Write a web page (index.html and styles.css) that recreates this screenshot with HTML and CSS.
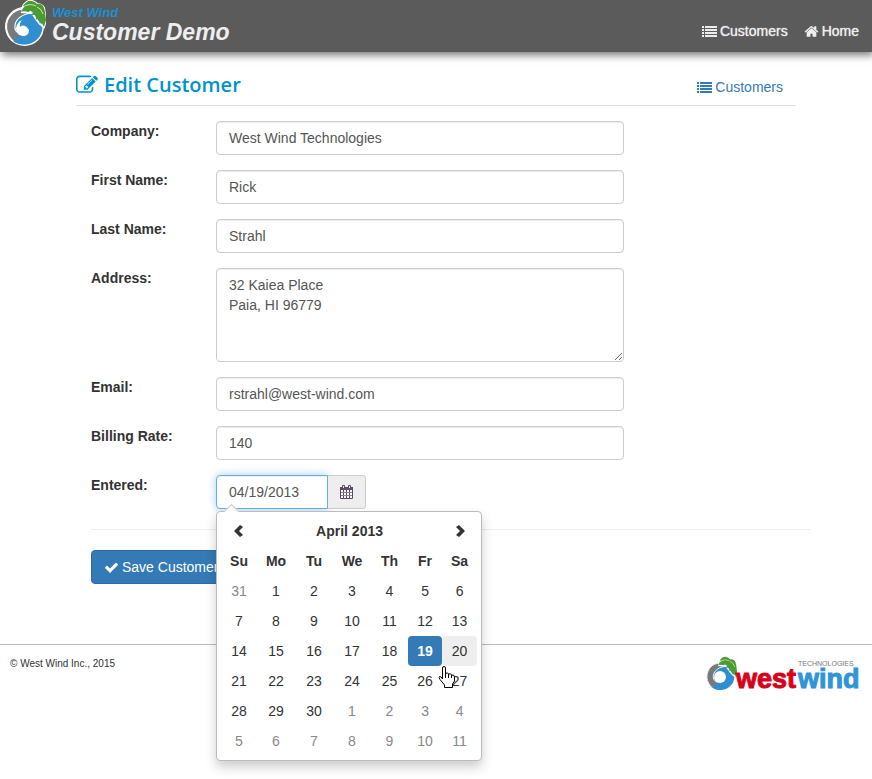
FILE: index.html
```
<!DOCTYPE html>
<html lang="en">
<head>
    <meta charset="UTF-8">
    <meta name="viewport" content="width=device-width, initial-scale=1.0">
    <title>West Wind Customer Demo</title>
    <link rel="stylesheet" href="styles.css">
</head>
<body>
    <!-- shared icons -->
    <svg class="symbols" aria-hidden="true">
        <symbol id="icon-list" viewBox="0 0 15 12">
            <path d="M0 0h2v2H0zM3 0h12v2H3zM0 3h2v2H0zM3 3h12v2H3zM0 6h2v2H0zM3 6h12v2H3zM0 9h2v2H0zM3 9h12v2H3z"/>
        </symbol>
        <symbol id="icon-home" viewBox="0 0 1792 1792">
            <path d="M1472 992v480q0 26-19 45t-45 19h-384v-384h-256v384h-384q-26 0-45-19t-19-45v-480q0-1 .5-3t.5-3l575-474 575 474q1 2 1 6zm223-69l-62 74q-8 9-21 11h-3q-13 0-21-7l-692-577-692 577q-12 8-24 7-13-2-21-11l-62-74q-8-10-7-23.5t11-21.5l719-599q32-26 76-26t76 26l244 204v-195q0-14 9-23t23-9h192q14 0 23 9t9 23v408l219 182q10 8 11 21.5t-7 23.5z"/>
        </symbol>
        <symbol id="icon-check" viewBox="0 0 1792 1792">
            <path d="M1671 566q0 40-28 68l-724 724-136 136q-28 28-68 28t-68-28l-136-136-362-362q-28-28-28-68t28-68l136-136q28-28 68-28t68 28l294 295 656-657q28-28 68-28t68 28l136 136q28 28 28 68z"/>
        </symbol>
        <symbol id="icon-edit" viewBox="0 0 1792 1792">
            <path d="M888 1184l116-116-152-152-116 116v56h96v96h56zm440-720q-16-16-33 1l-350 350q-17 17-1 33t33-1l350-350q17-17 1-33zm80 594v190q0 119-84.5 203.5t-203.5 84.5h-832q-119 0-203.5-84.5t-84.5-203.5v-832q0-119 84.5-203.5t203.5-84.5h832q63 0 117 25 15 7 18 23 3 17-9 29l-49 49q-14 14-32 8-23-6-45-6h-832q-66 0-113 47t-47 113v832q0 66 47 113t113 47h832q66 0 113-47t47-113v-126q0-13 9-22l64-64q15-15 35-7t20 29zm-96-738l288 288-672 672h-288v-288zm444 132l-92 92-288-288 92-92q28-28 68-28t68 28l152 152q28 28 28 68t-28 68z"/>
        </symbol>
        <!-- wave and palm, used by both logos -->
        <symbol id="wave" viewBox="0 0 42 48">
            <circle cx="20.500" cy="26.500" r="19.500" fill="#fff"/>
            <circle cx="20.500" cy="26.500" r="18" fill="#2f8fd0"/>
            <path fill="#77797a" stroke="#fff" stroke-width="1.200" d="M25 10C12 6 2 16 2.500 28C3 34 6 38 9 41C13 41 17 38 19 35C13 34 10 30 11 25C12 19 18 14 28 13z"/>
            <path fill="#2f8fd0" d="M9 41C12 39 15 37 17 34L25 36L22 44Q14 45 9 41z"/>
        </symbol>
        <symbol id="palm" viewBox="0 0 42 48">
            <path fill="none" stroke="#fff" stroke-width="2" d="M19 6Q23 0 28 1Q32 2 33 4Q38 4 40 8L42 20L40 27L36 24L32 19L28 13L18 12z"/>
            <path fill="#4b9c2e" d="M19 6Q23 0 28 1Q32 2 33 4Q38 3 40 8L41 12L42 20L40 27L37 21L36 24L34 18L32 20L32 15L28 15L29 11Q26 10 24 12Q21 10 17 12Q19 7 22 6z"/>
            <path fill="none" stroke="#fff" stroke-width=".7" d="M20 6.500Q26 3 32 6M33 7Q37 8 39 14"/>
        </symbol>
    </svg>

    <header class="banner">
        <a class="brand" href="#">
            <svg class="brand-logo" viewBox="0 0 42 48" aria-hidden="true">
                <use href="#wave" width="42" height="48"/>
                <path fill="#fff" d="M25 30Q25 36 19 36Q12 35 12 28Q13 22 18 20Q15 24 16 27Q20 23 25 30z"/>
                <use href="#palm" width="42" height="48"/>
            </svg>
            <span class="brand-text">
                <span class="brand-small">West Wind</span>
                <span class="brand-name">Customer Demo</span>
            </span>
        </a>
        <nav class="menu">
            <a href="#"><svg class="icon-list" aria-hidden="true"><use href="#icon-list"/></svg>Customers</a>
            <a href="#"><svg class="icon" aria-hidden="true"><use href="#icon-home"/></svg>Home</a>
        </nav>
    </header>

    <main class="container">
        <div class="page-header">
            <h1><svg class="icon-edit" aria-hidden="true"><use href="#icon-edit"/></svg>Edit Customer</h1>
            <a href="#"><svg class="icon-list" aria-hidden="true"><use href="#icon-list"/></svg>Customers</a>
        </div>

        <form class="edit-form">
            <div class="form-group">
                <label for="company">Company:</label>
                <input type="text" id="company" class="form-control" value="West Wind Technologies">
            </div>
            <div class="form-group">
                <label for="first-name">First Name:</label>
                <input type="text" id="first-name" class="form-control" value="Rick">
            </div>
            <div class="form-group">
                <label for="last-name">Last Name:</label>
                <input type="text" id="last-name" class="form-control" value="Strahl">
            </div>
            <div class="form-group">
                <label for="address">Address:</label>
                <textarea id="address" class="form-control" rows="4">32 Kaiea Place
Paia, HI 96779</textarea>
            </div>
            <div class="form-group">
                <label for="email">Email:</label>
                <input type="text" id="email" class="form-control" value="rstrahl@west-wind.com">
            </div>
            <div class="form-group">
                <label for="rate">Billing Rate:</label>
                <input type="text" id="rate" class="form-control" value="140">
            </div>
            <div class="form-group">
                <label for="entered">Entered:</label>
                <div class="input-group">
                    <input type="text" id="entered" class="form-control date-input" value="04/19/2013">
                    <button type="button" class="addon" aria-label="Pick a date">
                        <svg width="13" height="14" viewBox="0 0 13 14" aria-hidden="true">
                            <path fill="#fff" d="M1 5h11v8H1z"/>
                            <path fill="#5a4a68" d="M0 2h13v3H0z"/>
                            <path fill="none" stroke="#5a4a68" d="M.5 2.500v11h12v-11M3.500 5v8M6.500 5v8M9.500 5v8"/>
                            <path fill="none" stroke="#8d8296" d="M1 7.500h11M1 10.500h11"/>
                            <path fill="#eee" stroke="#5a4a68" d="M2.500 .5h2v3h-2zM8.500 .5h2v3h-2z"/>
                        </svg>
                    </button>

                    <div class="datepicker">
                        <table>
                            <colgroup>
                                <col class="col-su"><col class="col-wide"><col class="col-wide"><col class="col-wide"><col class="col-th"><col class="col-fr"><col class="col-sa">
                            </colgroup>
                            <thead>
                                <tr>
                                    <th><button type="button" aria-label="Previous month"><svg width="12" height="12" viewBox="0 0 12 12"><path d="M7 0l3 2-4 4 4 4-3 2-6-6z"/></svg></button></th>
                                    <th colspan="5"><button type="button">April 2013</button></th>
                                    <th><button type="button" aria-label="Next month"><svg width="12" height="12" viewBox="0 0 12 12"><path d="M5 0L2 2l4 4-4 4 3 2 6-6z"/></svg></button></th>
                                </tr>
                                <tr><th>Su</th><th>Mo</th><th>Tu</th><th>We</th><th>Th</th><th>Fr</th><th>Sa</th></tr>
                            </thead>
                            <tbody>
                                <tr>
                                    <td><button type="button" class="other">31</button></td>
                                    <td><button type="button">1</button></td>
                                    <td><button type="button">2</button></td>
                                    <td><button type="button">3</button></td>
                                    <td><button type="button">4</button></td>
                                    <td><button type="button">5</button></td>
                                    <td><button type="button">6</button></td>
                                </tr>
                                <tr>
                                    <td><button type="button">7</button></td>
                                    <td><button type="button">8</button></td>
                                    <td><button type="button">9</button></td>
                                    <td><button type="button">10</button></td>
                                    <td><button type="button">11</button></td>
                                    <td><button type="button">12</button></td>
                                    <td><button type="button">13</button></td>
                                </tr>
                                <tr>
                                    <td><button type="button">14</button></td>
                                    <td><button type="button">15</button></td>
                                    <td><button type="button">16</button></td>
                                    <td><button type="button">17</button></td>
                                    <td><button type="button">18</button></td>
                                    <td><button type="button" class="active">19</button></td>
                                    <td><button type="button" class="hover">20</button></td>
                                </tr>
                                <tr>
                                    <td><button type="button">21</button></td>
                                    <td><button type="button">22</button></td>
                                    <td><button type="button">23</button></td>
                                    <td><button type="button">24</button></td>
                                    <td><button type="button">25</button></td>
                                    <td><button type="button">26</button></td>
                                    <td><button type="button">27</button></td>
                                </tr>
                                <tr>
                                    <td><button type="button">28</button></td>
                                    <td><button type="button">29</button></td>
                                    <td><button type="button">30</button></td>
                                    <td><button type="button" class="other">1</button></td>
                                    <td><button type="button" class="other">2</button></td>
                                    <td><button type="button" class="other">3</button></td>
                                    <td><button type="button" class="other">4</button></td>
                                </tr>
                                <tr>
                                    <td><button type="button" class="other">5</button></td>
                                    <td><button type="button" class="other">6</button></td>
                                    <td><button type="button" class="other">7</button></td>
                                    <td><button type="button" class="other">8</button></td>
                                    <td><button type="button" class="other">9</button></td>
                                    <td><button type="button" class="other">10</button></td>
                                    <td><button type="button" class="other">11</button></td>
                                </tr>
                            </tbody>
                        </table>
                        <svg class="pointer" width="17" height="22" viewBox="0 0 17 22" aria-hidden="true">
                            <path fill="#fff" stroke="#000" d="M4.500 13V2Q4.500 .5 6 .5T7.500 2V7.500Q10 6 10.500 8Q13 7 13.500 9Q16.500 8.500 16.500 11V15L14.500 18V21.500H6.500V19L2 13.500Q.5 11.500 1.500 10.500Q3 10 4.500 13z"/>
                            <path fill="none" stroke="#000" d="M7.500 7v5M10.500 8v4M13.500 9v3"/>
                        </svg>
                    </div>
                </div>
            </div>

            <hr>
            <button type="submit" class="btn-primary"><svg class="icon" aria-hidden="true"><use href="#icon-check"/></svg>Save Customer</button>
        </form>
    </main>

    <footer class="footer">
        <small>© West Wind Inc., 2015</small>
        <a class="footer-logo" href="#" aria-label="West Wind Technologies">
            <svg width="156" height="38" viewBox="0 0 156 38" aria-hidden="true">
                <use href="#wave" width="32" height="37"/>
                <circle cx="15" cy="21" r="6" fill="#fff"/>
                <use href="#palm" width="32" height="37"/>
                <text class="logo-west" x="31" y="32">west</text>
                <text class="logo-wind" x="93" y="32">wind</text>
                <text class="logo-tech" x="93" y="10">TECHNOLOGIES</text>
            </svg>
        </a>
    </footer>
</body>
</html>
```
FILE: styles.css
```
* {
    box-sizing: border-box;
}

body {
    min-height: 100vh;
    margin: 0;
    background-color: #fff;
    color: #333;
    font-family: "Helvetica Neue", Helvetica, Arial, "Liberation Sans", sans-serif;
    font-size: 14px;
    line-height: 20px;
}

a {
    color: #337ab7;
    text-decoration: none;
}

button,
input,
textarea {
    margin: 0;
    font-family: inherit;
    font-size: 14px;
    line-height: 20px;
}

svg {
    fill: currentColor;
}

.symbols {
    position: absolute;
    width: 0;
    height: 0;
}

.icon {
    width: 15px;
    height: 15px;
    margin-right: 3px;
    vertical-align: -3px;
}

.icon-list {
    width: 15px;
    height: 12px;
    margin-right: 3px;
    vertical-align: -2px;
}

/* banner */
.banner {
    display: flex;
    justify-content: space-between;
    height: 52px;
    padding: 0 13px 0 4px;
    background-color: #5b5b5b;
    box-shadow: 2px 3px 8px #777;
}

.brand {
    display: flex;
    gap: 6px;
    color: #eee;
    font-style: italic;
    font-weight: bold;
}

.brand-logo {
    width: 42px;
    height: 48px;
}

.brand-text {
    display: flex;
    flex-direction: column;
    padding-top: 6px;
}

.brand-small {
    color: #1a90d2;
    font-size: 13px;
    line-height: 14px;
}

.brand-name {
    font-size: 23px;
    line-height: 24px;
}

.menu {
    display: flex;
    gap: 16px;
    padding-top: 21px;
}

.menu a {
    color: #eee;
    text-shadow: 0 0 1px #eee;
}

/* page */
.container {
    max-width: 750px;
    margin: 0 auto;
    padding: 0 15px;
}

.page-header {
    display: flex;
    justify-content: space-between;
    align-items: flex-end;
    height: 54px;
    margin-bottom: 15px;
    padding: 0 13px 8px 0;
    border-bottom: 1px solid #ddd;
}

h1 {
    margin: 0;
    color: #0092d0;
    font-family: "Trebuchet MS", "Open Sans", sans-serif;
    font-size: 20px;
    font-weight: 600;
    line-height: 24px;
}

.icon-edit {
    width: 22px;
    height: 22px;
    margin-right: 6px;
    vertical-align: -4px;
}

.edit-form {
    margin-right: -15px;
    padding-left: 15px;
}

.form-group {
    display: flex;
    align-items: flex-start;
    margin-bottom: 15px;
}

label {
    width: 125px;
    font-weight: bold;
}

.form-control {
    display: block;
    width: 408px;
    height: 34px;
    padding: 6px 12px;
    border: 1px solid #ccc;
    border-radius: 4px;
    background-color: #fff;
    box-shadow: inset 0 1px 1px rgba(0, 0, 0, 0.075);
    color: #555;
}

textarea.form-control {
    height: 94px;
    resize: vertical;
}

.input-group {
    position: relative;
    display: flex;
}

.date-input {
    width: 112px;
    border-color: #66afe9;
    border-radius: 4px 0 0 4px;
    outline: 0;
    box-shadow: inset 0 1px 1px rgba(0, 0, 0, 0.075), 0 0 8px rgba(102, 175, 233, 0.6);
}

.addon {
    display: flex;
    align-items: center;
    justify-content: center;
    width: 38px;
    padding: 0;
    border: 1px solid #ccc;
    border-left: 0;
    border-radius: 0 4px 4px 0;
    background-color: #eee;
}

hr {
    margin: 20px 0;
    border: 0;
    border-top: 1px solid #eee;
}

.btn-primary {
    display: block;
    padding: 6px 12px;
    border: 1px solid #2e6da4;
    border-radius: 4px;
    background-color: #337ab7;
    color: #fff;
}

/* calendar popup */
.datepicker {
    position: absolute;
    top: 36px;
    left: 0;
    z-index: 10;
    padding: 4px;
    border: 1px solid #bbb;
    border-radius: 4px;
    background-color: #fff;
    box-shadow: 0 6px 12px rgba(0, 0, 0, 0.2);
}

.datepicker::before {
    content: "";
    position: absolute;
    top: -6px;
    left: 9px;
    width: 10px;
    height: 10px;
    border: 1px solid #ccc;
    border-right: 0;
    border-bottom: 0;
    background-color: #fff;
    transform: rotate(45deg);
}

.datepicker table {
    position: relative;
    width: 256px;
    border-spacing: 0;
    table-layout: fixed;
}

.col-su {
    width: 36px;
}

.col-wide {
    width: 38px;
}

.col-th {
    width: 37px;
}

.col-fr {
    width: 34px;
}

.col-sa {
    width: 35px;
}

.datepicker th,
.datepicker td {
    height: 30px;
    padding: 0;
    text-align: center;
}

.datepicker button {
    display: block;
    width: 100%;
    height: 30px;
    padding: 0;
    border: 0;
    border-radius: 4px;
    background: none;
    color: #333;
    font-weight: inherit;
}

.datepicker th svg {
    vertical-align: -1px;
}

.datepicker .other {
    color: #888;
}

.datepicker .active {
    background-color: #337ab7;
    color: #fff;
    font-weight: bold;
}

.datepicker .hover {
    background-color: #eee;
}

.pointer {
    position: absolute;
    top: 154px;
    left: 221px;
}

/* footer */
.footer {
    display: flex;
    justify-content: space-between;
    align-items: flex-start;
    margin-top: 60px;
    padding: 11px 11px 0 10px;
    border-top: 1px solid #bbb;
}

.footer small {
    padding-top: 2px;
    font-size: 10px;
    line-height: 12px;
}

.logo-west,
.logo-wind {
    font-size: 27px;
    font-weight: bold;
    stroke-width: 1px;
}

.logo-west {
    fill: #d9001b;
    stroke: #d9001b;
}

.logo-wind {
    fill: #2f94d8;
    stroke: #2f94d8;
}

.logo-tech {
    fill: #777;
    font-size: 7px;
}
```
